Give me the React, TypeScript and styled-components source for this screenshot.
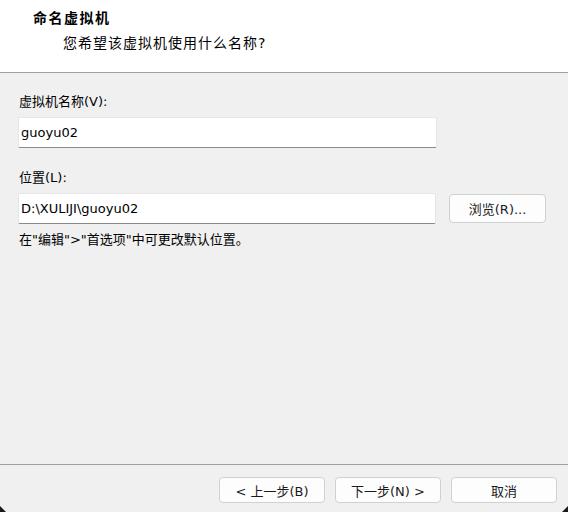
import React from 'react';
import styled, { createGlobalStyle } from 'styled-components';

const GlobalStyle = createGlobalStyle`
  html, body {
    margin: 0;
    padding: 0;
    background: #f0f0f0;
  }
  body {
    font-family: "DejaVu Sans", "Noto Sans CJK SC", sans-serif;
    font-size: 13px;
    color: #000;
  }
`;

const Window = styled.div`
  position: relative;
  width: 568px;
  height: 512px;
  background: #f0f0f0;
  display: flex;
  flex-direction: column;
  overflow: hidden;
`;

const Header = styled.div`
  height: 73px;
  background: #fff;
  border-bottom: 1px solid #a0a0a0;
  box-sizing: border-box;
  padding: 8px 0 0 33px;
`;

const Title = styled.div`
  font-size: 14px;
  font-weight: bold;
  letter-spacing: 1.5px;
  line-height: 20px;
`;

const Subtitle = styled.div`
  font-size: 14px;
  letter-spacing: 1px;
  line-height: 20px;
  margin: 5px 0 0 30px;
`;

const Body = styled.div`
  flex: 1;
  padding: 19px 22px 0 18px;
  display: flex;
  flex-direction: column;
`;

const Label = styled.div<{ $mt: number }>`
  line-height: 20px;
  margin: ${(p) => p.$mt}px 0 5px;
  padding-left: 1px;
`;

const Row = styled.div`
  display: flex;
  align-items: center;
  gap: 13px;
`;

const Input = styled.div`
  width: 419px;
  height: 31px;
  box-sizing: border-box;
  background: #fff;
  border: 1px solid #e6e6e6;
  border-bottom: 1px solid #8a8a8a;
  border-radius: 2px;
  padding-left: 2px;
  display: flex;
  align-items: center;
`;

const Button = styled.button<{ $w: number; $h: number }>`
  width: ${(p) => p.$w}px;
  height: ${(p) => p.$h}px;
  box-sizing: border-box;
  background: #fdfdfd;
  border: 1px solid #d0d0d0;
  border-radius: 4px;
  font-family: "DejaVu Sans", "Noto Sans CJK SC", sans-serif;
  font-size: 13px;
  color: #1a1a1a;
  padding: 0;
`;

const Hint = styled.div`
  line-height: 20px;
  padding-left: 1px;
  margin-top: 6px;
`;

const Footer = styled.div`
  height: 48px;
  border-top: 1px solid #a0a0a0;
  box-sizing: border-box;
  display: flex;
  justify-content: flex-end;
  align-items: flex-start;
  gap: 10px;
  padding: 12px 11px 0 0;
`;

const Corner = styled.div<{ $side: 'left' | 'right' }>`
  position: absolute;
  bottom: 0;
  width: 6px;
  height: 6px;
  background: #1a1a1a;
  ${(p) =>
    p.$side === 'left'
      ? 'left: 0; clip-path: polygon(0 0, 100% 100%, 0 100%);'
      : 'right: 0; clip-path: polygon(100% 0, 100% 100%, 0 100%);'}
`;

export default function App() {
  return (
    <>
      <GlobalStyle />
      <Window>
        <Header>
          <Title>命名虚拟机</Title>
          <Subtitle>您希望该虚拟机使用什么名称?</Subtitle>
        </Header>
        <Body>
          <Label $mt={0}>虚拟机名称(V):</Label>
          <Row>
            <Input>guoyu02</Input>
          </Row>
          <Label $mt={20}>位置(L):</Label>
          <Row>
            <Input>D:\XULIJI\guoyu02</Input>
            <Button $w={97} $h={29}>浏览(R)...</Button>
          </Row>
          <Hint>在"编辑"&gt;"首选项"中可更改默认位置。</Hint>
        </Body>
        <Footer>
          <Button $w={106} $h={26}>&lt; 上一步(B)</Button>
          <Button $w={106} $h={26}>下一步(N) &gt;</Button>
          <Button $w={106} $h={26}>取消</Button>
        </Footer>
        <Corner $side="left" />
        <Corner $side="right" />
      </Window>
    </>
  );
}
